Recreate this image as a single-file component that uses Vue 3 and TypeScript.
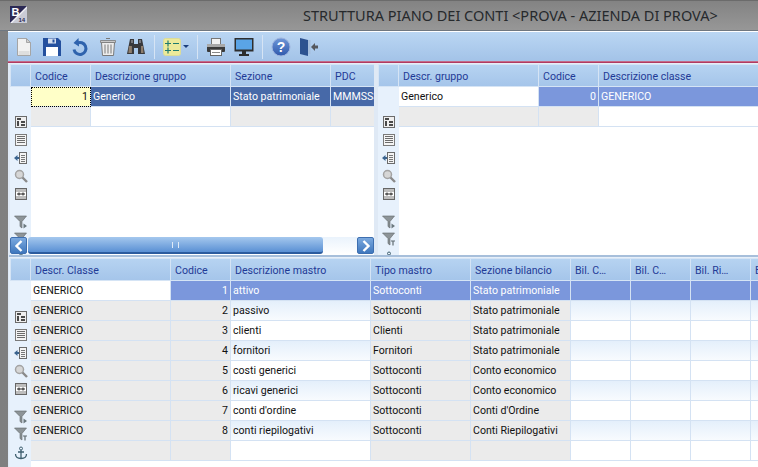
<script setup lang="ts">
type Column = { title: string; width: number; right?: boolean; grey?: boolean }
type Row = { cells: string[]; kind?: 'selected' | 'active' | 'tint' | 'empty' }
type Pane = { id: string; cols: Column[]; rows: Row[]; scroll?: boolean }

const tools = ['new', 'save', 'undo', 'trash', 'find', 'sep', 'list', 'sep', 'print', 'screen', 'sep', 'help', 'exit']
const sideIcons = ['tree', 'lines', 'import', 'zoom', 'fit', 'gap', 'filter', 'filter2', 'anchor']

const sp = 'Stato patrimoniale'
const ce = 'Conto economico'

const panes: Pane[] = [
  {
    id: 'group',
    scroll: true,
    cols: [
      { title: 'Codice', width: 60, right: true, grey: true },
      { title: 'Descrizione gruppo', width: 140 },
      { title: 'Sezione', width: 100, grey: true },
      { title: 'PDC', width: 44, grey: true },
    ],
    rows: [
      { cells: ['1', 'Generico', sp, 'MMMSSSS'], kind: 'selected' },
      { cells: ['', '', '', ''], kind: 'empty' },
    ],
  },
  {
    id: 'cls',
    cols: [
      { title: 'Descr. gruppo', width: 140, grey: true },
      { title: 'Codice', width: 60, right: true, grey: true },
      { title: 'Descrizione classe', width: 160 },
    ],
    rows: [
      { cells: ['Generico', '0', 'GENERICO'], kind: 'active' },
      { cells: ['', '', ''], kind: 'empty' },
    ],
  },
  {
    id: 'mastro',
    cols: [
      { title: 'Descr. Classe', width: 140, grey: true },
      { title: 'Codice', width: 60, right: true, grey: true },
      { title: 'Descrizione mastro', width: 140 },
      { title: 'Tipo mastro', width: 100, grey: true },
      { title: 'Sezione bilancio', width: 100, grey: true },
      { title: 'Bil. C…', width: 60 },
      { title: 'Bil. C…', width: 60 },
      { title: 'Bil. Ri…', width: 60 },
      { title: 'B', width: 40 },
    ],
    rows: [
      { cells: ['GENERICO', '1', 'attivo', 'Sottoconti', sp, '', '', '', ''], kind: 'active' },
      { cells: ['GENERICO', '2', 'passivo', 'Sottoconti', sp, '', '', '', ''], kind: 'tint' },
      { cells: ['GENERICO', '3', 'clienti', 'Clienti', sp, '', '', '', ''] },
      { cells: ['GENERICO', '4', 'fornitori', 'Fornitori', sp, '', '', '', ''], kind: 'tint' },
      { cells: ['GENERICO', '5', 'costi generici', 'Sottoconti', ce, '', '', '', ''] },
      { cells: ['GENERICO', '6', 'ricavi generici', 'Sottoconti', ce, '', '', '', ''], kind: 'tint' },
      { cells: ['GENERICO', '7', "conti d'ordine", 'Sottoconti', "Conti d'Ordine", '', '', '', ''] },
      { cells: ['GENERICO', '8', 'conti riepilogativi', 'Sottoconti', 'Conti Riepilogativi', '', '', '', ''], kind: 'tint' },
      { cells: ['', '', '', '', '', '', '', '', ''], kind: 'empty' },
    ],
  },
]

const columns = (cols: Column[]) => ({ gridTemplateColumns: cols.map(c => c.width + 'px').join(' ') })

// prima colonna della riga attiva resta bianca, la cella del codice ha il focus
const cellClass = (p: Pane, r: Row, ri: number, ci: number) => [
  r.kind,
  {
    right: p.cols[ci].right,
    grey: p.cols[ci].grey,
    plain: r.kind === 'active' && ci === 0,
    focus: p.id === 'group' && ri === 0 && ci === 0,
  },
]
</script>

<template>
  <div class="window">
    <header class="titlebar">
      <svg class="logo" width="17" height="17" viewBox="0 0 17 17">
        <rect width="17" height="17" fill="#2b2954" />
        <path d="M17 1V17H1Z" fill="#c9cbd6" />
        <path d="M17 0V2L2 17H0Z" fill="#f2f2f6" />
        <text x="1.5" y="10" class="logo-b">B</text>
        <text x="8.5" y="16" class="logo-n">14</text>
      </svg>
      <span class="title">STRUTTURA PIANO DEI CONTI &lt;PROVA - AZIENDA DI PROVA&gt;</span>
    </header>

    <main class="body">
      <nav class="toolbar">
        <template v-for="(t, i) in tools" :key="i">
          <span v-if="t === 'sep'" class="tool-sep"></span>
          <span v-else-if="t === 'list'" class="tool-list">
            <svg width="18" height="18" viewBox="0 0 18 18">
              <rect x="0.5" y="0.5" width="17" height="17" rx="2" fill="#edea9a" stroke="#dcdc98" />
              <path d="M2 5.5h6M5 2.5v6M2 12.5h6M5 9.5v6M10 5.5h6M10 12.5h6" stroke="#1f7a6e" stroke-width="1.2" fill="none" />
            </svg>
            <i class="caret"></i>
          </span>
          <svg v-else class="tool" width="20" height="20" viewBox="0 0 20 20">
            <template v-if="t === 'new'">
              <path d="M3.5 1.5h9l4 4v13h-13Z" fill="#f1f1f1" stroke="#a5a5a5" />
              <path d="M12.5 1.5v4h4Z" fill="#cfcfcf" stroke="#a5a5a5" />
              <path d="M4.5 14h11v4h-11Z" fill="#dedede" />
            </template>
            <template v-else-if="t === 'save'">
              <path d="M1 1h15l3 3v15H1Z" fill="#24509e" />
              <rect x="6" y="1.5" width="8" height="5" fill="#d5dfef" />
              <rect x="10.5" y="2.5" width="2" height="3" fill="#24509e" />
              <rect x="4" y="10" width="12" height="9" fill="#fff" />
            </template>
            <template v-else-if="t === 'undo'">
              <path d="M7 6.2A6 6 0 1 1 4 12.5" fill="none" stroke="#2f63ad" stroke-width="3" />
              <path d="M8.5 1 3.500 6 9 9.5Z" fill="#2f63ad" />
            </template>
            <template v-else-if="t === 'trash'">
              <path d="M3.5 5.5h13l-1 13h-11Z" fill="#ececec" stroke="#7a7a7a" />
              <path d="M2.500 3.500h15v2h-15Z" fill="#c8c8c8" stroke="#7a7a7a" stroke-width="0.8" />
              <path d="M8 1.500h4M7 7.500v9M10 7.500v9M13 7.500v9" stroke="#7a7a7a" fill="none" />
            </template>
            <template v-else-if="t === 'find'">
              <path d="M4 2h4v5h4V2h4l3 15h-7V11H8v6H1Z" fill="#38383b" />
              <path d="M3 9 2.4 16h3.500V9ZM15 9v7h2.500L17 9Z" fill="#8e7d6c" />
              <path d="M5 3h2v3H5ZM13 3h2v3h-2Z" fill="#77777c" />
            </template>
            <template v-else-if="t === 'print'">
              <rect x="5.5" y="1.5" width="9" height="6" fill="#f2f2f2" stroke="#777" />
              <rect x="1" y="7" width="18" height="8" rx="1" fill="#3a3a3a" />
              <rect x="1" y="7" width="18" height="3" fill="#a8a8a8" />
              <rect x="4.5" y="12.500" width="11" height="6" fill="#fff" stroke="#666" />
              <path d="M6 15.500h8" stroke="#888" />
            </template>
            <template v-else-if="t === 'screen'">
              <rect x="0.5" y="1" width="19" height="13.500" fill="#2e2e2e" />
              <rect x="2" y="2.5" width="16" height="10" fill="#5aa4e6" />
              <path d="M8 14h4v3H8ZM5 17h10v2H5Z" fill="#2e2e2e" />
            </template>
            <template v-else-if="t === 'help'">
              <defs>
                <linearGradient id="help-fill" x1="0" y1="0" x2="0" y2="1">
                  <stop offset="0" stop-color="#6f97d8" />
                  <stop offset="1" stop-color="#2f58ac" />
                </linearGradient>
              </defs>
              <circle cx="10" cy="10" r="9" fill="url(#help-fill)" stroke="#9db3dd" />
              <text x="10" y="15" text-anchor="middle" class="help-mark">?</text>
            </template>
            <template v-else-if="t === 'exit'">
              <path d="M1 1 9 3v16L1 17Z" fill="#2d5290" />
              <path d="M9 3h2.500v14H9Z" fill="#a6bedd" />
              <path d="M19 8.500h-3V6l-4 4 4 4v-2.500h3Z" fill="#55585e" />
            </template>
          </svg>
        </template>
      </nav>
      <div class="redline"></div>

      <div class="panes">
        <section v-for="p in panes" :key="p.id" class="pane" :class="`pane-${p.id}`">
          <aside class="side">
            <div class="corner"></div>
            <div class="side-icons">
              <template v-for="s in sideIcons" :key="s">
                <span v-if="s === 'gap'" class="side-gap"></span>
                <svg v-else class="side-icon" :class="`icon-${s}`" width="14" height="14" viewBox="0 0 14 14">
                  <template v-if="s === 'tree'">
                    <rect x="1.5" y="1.5" width="11" height="11" fill="#efefef" stroke="#6b6b6b" />
                    <path d="M3 3h4v2H3ZM7 6h4v2H7ZM7 9h4v2H7ZM3 6h2v5H3Z" fill="#4a4a4a" />
                  </template>
                  <template v-if="s === 'lines'">
                    <rect x="1.5" y="1.5" width="11" height="11" fill="#f4f4f4" stroke="#7a7a7a" />
                    <path d="M3 3.5h8M3 5.5h8M3 7.5h8M3 9.5h8" stroke="#6b6b6b" />
                  </template>
                  <template v-if="s === 'import'">
                    <rect x="5.5" y="1.5" width="7" height="11" fill="#f4f4f4" stroke="#6b6b6b" />
                    <path d="M7 4.5h4M7 6.5h4M7 8.5h4M7 10.5h4" stroke="#777" />
                    <path d="M0 7l3.500-3v2H5v2H3.500v2Z" fill="#3b648f" />
                  </template>
                  <template v-if="s === 'zoom'">
                    <circle cx="5.5" cy="5.5" r="4" fill="#d6d6d6" stroke="#a3a3a3" stroke-width="1.5" />
                    <path d="M8.5 8.5 13 13" stroke="#8a8a8a" stroke-width="2.4" />
                  </template>
                  <template v-if="s === 'fit'">
                    <rect x="1.5" y="1.5" width="11" height="11" fill="#bdbdbd" stroke="#666" />
                    <rect x="2" y="5" width="10" height="4" fill="#fff" />
                    <path d="M3 7h8M5 5.500v3M9 5.500v3" stroke="#222" />
                  </template>
                  <template v-if="s === 'filter'">
                    <path d="M0.5 1h12L8 6.500V13L6 11.500V6.500Z" fill="#8d9498" stroke="#5f6568" stroke-width="0.6" />
                    <path d="M9.5 8.500 13 11l-3.500 2.500Z" fill="#6b787e" />
                  </template>
                  <template v-if="s === 'filter2'">
                    <path d="M0.5 1h12L8 6.500V13L6 11.500V6.500Z" fill="#8d9498" stroke="#5f6568" stroke-width="0.6" />
                    <path d="M9 9h4M11 9v4.500" stroke="#5f6b70" stroke-width="1.2" />
                  </template>
                  <template v-if="s === 'anchor'">
                    <circle cx="7" cy="2.500" r="1.500" fill="none" stroke="#3f5f6f" />
                    <path d="M7 4v9M4 6h6M1.500 8c0 3 2.500 4.500 5.500 4.500S12.500 11 12.500 8" fill="none" stroke="#3f5f6f" stroke-width="1.3" />
                  </template>
                </svg>
              </template>
            </div>
          </aside>
          <div class="table-wrap">
            <div class="grid" :style="columns(p.cols)">
              <div v-for="(c, i) in p.cols" :key="i" class="th">{{ c.title }}</div>
              <template v-for="(r, ri) in p.rows" :key="ri">
                <div v-for="(v, ci) in r.cells" :key="ci" class="td" :class="cellClass(p, r, ri, ci)">{{ v }}</div>
              </template>
            </div>
          </div>
          <div v-if="p.scroll" class="hscroll">
            <span class="arrow">
              <svg width="10" height="12" viewBox="0 0 10 12"><path d="M7.5 1 2.500 6l5 5" fill="none" stroke="#fff" stroke-width="2.4" /></svg>
            </span>
            <span class="thumb"><b></b></span>
            <span class="arrow">
              <svg width="10" height="12" viewBox="0 0 10 12"><path d="M2.500 1l5 5-5 5" fill="none" stroke="#fff" stroke-width="2.4" /></svg>
            </span>
          </div>
        </section>
      </div>
    </main>
  </div>
</template>

<style>
html, body { margin: 0; overflow: hidden; }
</style>

<style scoped>
.window {
  width: 758px;
  height: 467px;
  display: flex;
  flex-direction: column;
  overflow: hidden;
  background: linear-gradient(to right, #7f7f7f, #9a9a9a);
  font-family: Roboto, "Liberation Sans", sans-serif;
  font-size: 10.6px;
  color: #111;
}

.titlebar {
  height: 31px;
  flex: none;
  display: flex;
  align-items: center;
  padding: 0 0 2px 10px;
  background: linear-gradient(#838383, #979797);
  border-top: 1px solid #6b6b6b;
  border-bottom: 1px solid #6f7780;
  box-sizing: border-box;
}
.logo-b { font: bold 11px "Liberation Sans", sans-serif; fill: #fff; }
.logo-n { font: bold 6px "Liberation Sans", sans-serif; fill: #2b2954; }
.title {
  margin-left: 276px;
  font-family: "Noto Sans", sans-serif;
  font-size: 14.5px;
  color: #26292c;
  white-space: nowrap;
}

.body {
  flex: 1;
  min-height: 0;
  margin-left: 8px;
  display: flex;
  flex-direction: column;
  background: #eaf3fc;
  border-top: 1px solid #fff;
}

.toolbar {
  height: 29px;
  flex: none;
  display: flex;
  align-items: center;
  padding-left: 6px;
  gap: 8px;
  background: linear-gradient(#bad6f3, #a3c3e8);
}
.tool { flex: none; }
.tool-sep { width: 1px; height: 24px; background: #d6e4f4; }
.tool-list { display: flex; align-items: center; gap: 2px; }
.caret { width: 0; height: 0; border: 3px solid transparent; border-top: 3px solid #1c3f7e; margin-top: 3px; }
.help-mark { font: bold 14px "Liberation Sans", sans-serif; fill: #fff; }

.redline {
  height: 3px;
  flex: none;
  background: linear-gradient(#c46a86 0 1px, #b03a63 1px 2px, #e7edf6 2px);
}

.panes {
  flex: 1;
  min-height: 0;
  display: grid;
  grid-template-columns: 364px 1fr;
  grid-template-rows: 191px 1fr;
  column-gap: 4px;
  padding-left: 2px;
  background: #dfe9f5;
}

.pane {
  display: flex;
  position: relative;
  min-width: 0;
  overflow: hidden;
  background: #fff;
}
.pane-mastro {
  grid-column: 1 / -1;
  margin-left: -1px;
  padding: 1px 0 0 1px;
  border-top: 2px solid #a7bfdb;
  background: #e6eff9;
}

.side {
  width: 21px;
  flex: none;
  display: flex;
  flex-direction: column;
  background: #e7f1fc;
}
.corner {
  height: 23px;
  flex: none;
  background: linear-gradient(#b6d3f1, #a5c5ea);
  border: 1px solid #d5e4f5;
  box-sizing: border-box;
}
.side-icons {
  display: flex;
  flex-direction: column;
  align-items: center;
  padding-top: 28px;
  gap: 4px;
}
.pane-mastro .side-icons { padding-top: 29px; }
.side-icon { flex: none; }
.side-gap { height: 6px; flex: none; }
.icon-filter2 { margin-top: -1px; }
.icon-anchor { margin-top: 1px; }

.table-wrap { flex: 1; min-width: 0; overflow: hidden; background: #fff; }
.grid { display: grid; grid-template-rows: 23px; grid-auto-rows: 20px; }

.th {
  padding: 1px 4px 0;
  display: flex;
  align-items: center;
  white-space: nowrap;
  overflow: hidden;
  color: #1f3a96;
  background: linear-gradient(#b6d3f1, #a5c5ea);
  border: 1px solid #d5e4f5;
  border-left-width: 0;
  box-sizing: border-box;
}
.td {
  padding: 0 2px;
  display: flex;
  align-items: center;
  white-space: nowrap;
  overflow: hidden;
  background: #fff;
  border-right: 1px solid #d4e2f3;
  border-bottom: 1px solid #d4e2f3;
  box-sizing: border-box;
}
.td.right { justify-content: flex-end; }
.td.tint { background: linear-gradient(#e4effb, #f8fbfe); }
.td.grey { background: #ebebeb; }
.td.selected { background: #4769a8; color: #fff; }
.td.active { background: #7b97dc; color: #fff; }
.td.plain { background: #fff; color: #111; }
.td.focus { background: #ffffc8; color: #111; outline: 1px dotted #000; outline-offset: -1px; }

.hscroll {
  position: absolute;
  left: 0;
  right: 0;
  bottom: 1px;
  height: 17px;
  display: flex;
  background: linear-gradient(#eaf3fc, #fff);
}
.arrow {
  width: 17px;
  height: 17px;
  flex: none;
  display: flex;
  align-items: center;
  justify-content: center;
  border-radius: 2px;
  border: 1px solid #3e6fb0;
  box-sizing: border-box;
  background: linear-gradient(#7ba9df, #3f77bd);
}
.thumb {
  width: 296px;
  margin: 0 34px 0 1px;
  display: flex;
  align-items: center;
  justify-content: center;
  border-radius: 3px;
  box-sizing: border-box;
  border-bottom: 2px solid #2b5b9e;
  background: linear-gradient(#a5c8ee, #5a90d4);
}
.thumb b { width: 5px; height: 6px; border-left: 1px solid #dfeaf7; border-right: 1px solid #dfeaf7; }
</style>
